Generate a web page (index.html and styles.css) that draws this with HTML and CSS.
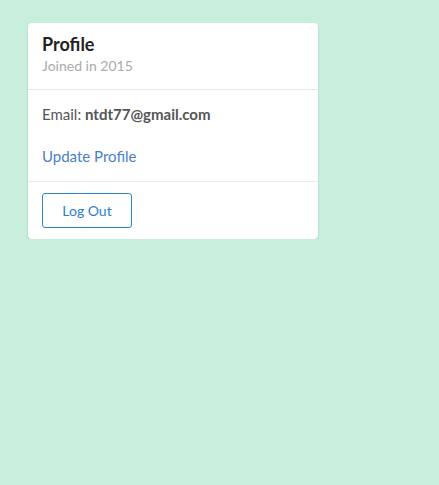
FILE: index.html
```html
<!DOCTYPE html>
<html>
<head>
<meta charset="utf-8">
<link rel="stylesheet" href="styles.css">
</head>
<body>
<div class="page">
  <div class="card">
    <div class="card-header">
      <div class="title">Profile</div>
      <div class="subtitle">Joined in 2015</div>
    </div>
    <div class="card-body">
      <div class="email">Email: <b>ntdt77@gmail.com</b></div>
      <a class="link" href="#">Update Profile</a>
    </div>
    <div class="card-footer">
      <button class="btn">Log Out</button>
    </div>
  </div>
</div>
</body>
</html>
```
FILE: styles.css
```css
html, body {
  margin: 0;
  padding: 0;
  background: #c8efdc;
  font-family: Lato, "Open Sans", sans-serif;
}
.page {
  padding: 23px 0 0 28px;
}
.card {
  width: 290px;
  background: #fff;
  border-radius: 4px;
  box-shadow: 0 1px 2px rgba(0,0,0,0.18);
}
.card-header {
  padding: 11px 14px 14px;
  border-bottom: 1px solid #e6e6e6;
}
.title {
  font-size: 18px;
  font-weight: 700;
  color: #222;
  line-height: 20px;
}
.subtitle {
  margin-top: 2px;
  font-size: 14px;
  color: #aaa;
  line-height: 19px;
}
.card-body {
  padding: 14px 14px 15px;
  border-bottom: 1px solid #ebebeb;
  display: flex;
  flex-direction: column;
  gap: 22px;
}
.email {
  font-size: 15px;
  color: #555;
  line-height: 20px;
}
.email b {
  font-weight: 700;
}
.link {
  font-size: 15px;
  color: #4a80c4;
  text-decoration: none;
  line-height: 20px;
}
.card-footer {
  padding: 11px 14px 11px;
}
.btn {
  display: block;
  width: 90px;
  height: 35px;
  border: 1px solid #2a86d1;
  border-radius: 3px;
  background: #fff;
  color: #2a7fcb;
  font-family: Lato, sans-serif;
  font-size: 14px;
  padding: 0;
}
```
